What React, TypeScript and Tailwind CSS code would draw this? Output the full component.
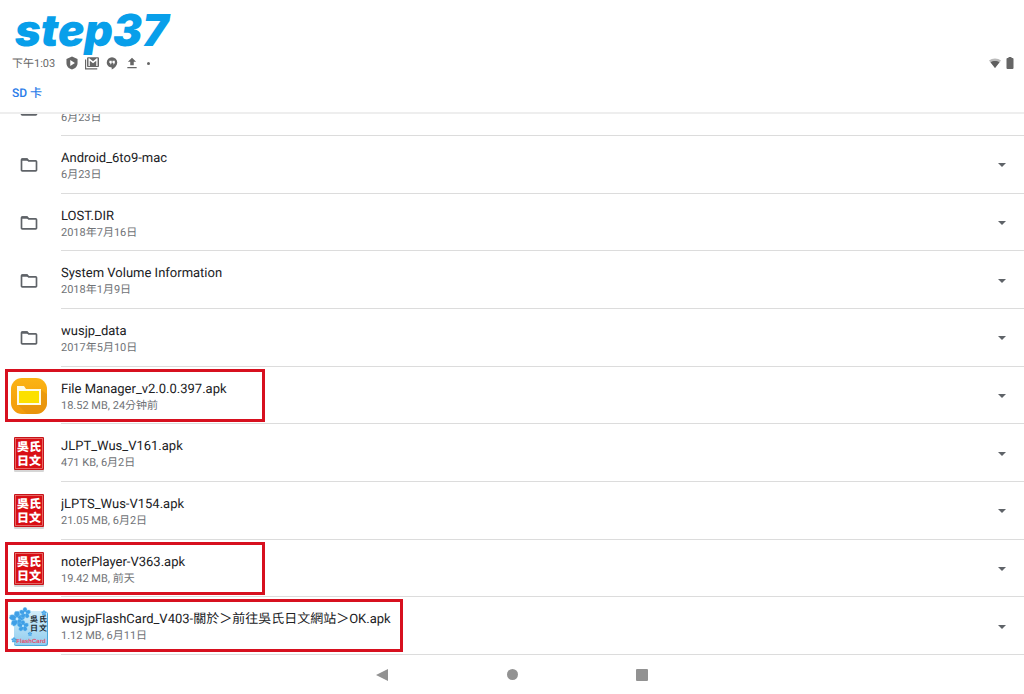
import type { ReactNode } from "react";

type Entry = {
  name: string;
  detail: string;
  icon: ReactNode;
  highlight?: "short" | "long";
};

function FolderIcon() {
  return (
    <svg className="size-5" viewBox="0 0 24 24" fill="#5f6368" aria-hidden="true">
      <path d="M9.2 6l2 2H20v10H4V6h5.2M10 4H4c-1.1 0-2 .9-2 2v12c0 1.1.9 2 2 2h16c1.1 0 2-.9 2-2V8c0-1.1-.9-2-2-2h-8l-2-2z" />
      <path d="M3 4h7l2 3H3z" />
    </svg>
  );
}

function FileManagerIcon() {
  return (
    <svg className="size-[38px]" viewBox="0 0 38 38" aria-hidden="true">
      <defs>
        <linearGradient id="fm-bg" x1="0" y1="0" x2="0" y2="1">
          <stop offset="0" stopColor="#fbb414" />
          <stop offset="1" stopColor="#f29a0c" />
        </linearGradient>
        <clipPath id="fm-clip">
          <rect x="1" y="1" width="36" height="36" rx="11" />
        </clipPath>
      </defs>
      <rect x="1" y="1" width="36" height="36" rx="11" fill="url(#fm-bg)" />
      <path d="M8 28l10 10h20V18l-8-6z" fill="#d9860c" opacity=".4" clipPath="url(#fm-clip)" />
      <path d="M7 9h7l2 3h15v16H7z" fill="#fffbe6" />
      <path d="M9 14h20v12H9z" fill="#fce000" />
    </svg>
  );
}

function SealIcon() {
  return (
    <svg className="h-9 w-8" viewBox="0 0 32 36" aria-hidden="true">
      <rect x="1" y="2" width="30" height="34" rx="1" fill="#bbb" opacity=".6" />
      <rect x="1" y="1" width="30" height="33" rx="1" fill="#c8141a" />
      <rect x="2.5" y="2.5" width="27" height="30" fill="#d90e14" stroke="#ee8a84" strokeWidth=".7" />
      <g
        fill="#fff"
        fontSize="12"
        fontWeight="900"
        textAnchor="middle"
        className="font-['Noto_Sans_CJK_TC',sans-serif]"
      >
        <text x="10" y="15">吳</text>
        <text x="22" y="15">氏</text>
        <text x="10" y="29">日</text>
        <text x="22" y="29">文</text>
      </g>
    </svg>
  );
}

function Blossom({ x, y, size }: { x: number; y: number; size: number }) {
  return (
    <g transform={`translate(${x} ${y}) scale(${size})`}>
      {[0, 72, 144, 216, 288].map((angle) => (
        <path
          key={angle}
          d="M0 0C-4-2-4-7-1-9L0-8l1-1C4-7 4-2 0 0z"
          fill="#3f9fe6"
          stroke="#83caf5"
          strokeWidth=".5"
          transform={`rotate(${angle})`}
        />
      ))}
      <circle r="1.6" fill="#c9ecff" />
    </g>
  );
}

function FlashCardIcon() {
  return (
    <svg className="size-10" viewBox="0 0 40 40" aria-hidden="true">
      <defs>
        <linearGradient id="card-bg" x1="0" y1="0" x2="0" y2="1">
          <stop offset="0" stopColor="#d2edfa" />
          <stop offset="1" stopColor="#92ceef" />
        </linearGradient>
      </defs>
      <rect x="5" y="5" width="34" height="34" rx="2" fill="#4ba8dc" />
      <rect x="5" y="4" width="33" height="34" rx="2" fill="url(#card-bg)" />
      <Blossom x={8} y={12} size={0.9} />
      <Blossom x={16} y={6} size={0.65} />
      <Blossom x={14} y={19} size={0.65} />
      <Blossom x={21} y={27} size={0.25} />
      <Blossom x={5} y={33} size={0.3} />
      <Blossom x={35} y={6} size={0.3} />
      <g
        fill="#1c2a33"
        fontSize="8"
        fontWeight="700"
        textAnchor="middle"
        className="font-['Noto_Sans_CJK_TC',sans-serif]"
      >
        <text x="25" y="15">吳</text>
        <text x="34" y="15">氏</text>
        <text x="25" y="24">日</text>
        <text x="34" y="24">文</text>
      </g>
      <text x="22" y="36" fill="#e2506e" fontSize="6" fontWeight="700" textAnchor="middle" className="font-['Liberation_Sans',sans-serif]">
        FlashCard
      </text>
    </svg>
  );
}

const entries: Entry[] = [
  { name: "Android_6to9-mac", detail: "6月23日", icon: <FolderIcon /> },
  { name: "LOST.DIR", detail: "2018年7月16日", icon: <FolderIcon /> },
  { name: "System Volume Information", detail: "2018年1月9日", icon: <FolderIcon /> },
  { name: "wusjp_data", detail: "2017年5月10日", icon: <FolderIcon /> },
  {
    name: "File Manager_v2.0.0.397.apk",
    detail: "18.52 MB, 24分钟前",
    icon: <FileManagerIcon />,
    highlight: "short",
  },
  { name: "JLPT_Wus_V161.apk", detail: "471 KB, 6月2日", icon: <SealIcon /> },
  { name: "jLPTS_Wus-V154.apk", detail: "21.05 MB, 6月2日", icon: <SealIcon /> },
  {
    name: "noterPlayer-V363.apk",
    detail: "19.42 MB, 前天",
    icon: <SealIcon />,
    highlight: "short",
  },
  {
    name: "wusjpFlashCard_V403-關於＞前往吳氏日文網站＞OK.apk",
    detail: "1.12 MB, 6月11日",
    icon: <FlashCardIcon />,
    highlight: "long",
  },
];

function StatusBar() {
  return (
    <div className="flex h-5 items-center justify-between pl-3 pr-[9px] text-[#666]">
      <div className="flex items-center gap-[6px]">
        <span className="w-[47px] whitespace-nowrap pt-px text-[11px] leading-5">下午1:03</span>
        <svg className="size-[14px]" viewBox="0 0 24 24" fill="currentColor" aria-hidden="true">
          <path
            fillRule="evenodd"
            d="M12 1L2.500 5v7c0 5.500 4 9.700 9.500 11 5.500-1.300 9.500-5.500 9.500-11V5zM9 7l8 5-8 5z"
          />
        </svg>
        <svg className="size-[14px]" viewBox="0 0 24 24" fill="currentColor" aria-hidden="true">
          <path d="M0 6v17h21v-2H2V6z" />
          <path
            fillRule="evenodd"
            d="M5.500 2H22c1.100 0 2 .900 2 2v13c0 1.100-.900 2-2 2H5.500c-1.100 0-2-.900-2-2V4c0-1.100.900-2 2-2zM6 17h2.200V8l5.600 4.500L19.300 8v9h2.200V4h-1.300l-6.400 5.200L7.300 4H6z"
          />
        </svg>
        <svg className="size-[14px]" viewBox="0 0 24 24" fill="currentColor" aria-hidden="true">
          <path
            fillRule="evenodd"
            d="M12 2a9 9 0 0 0-9 9c0 5 4 8.500 8.500 8.500V23C17 20.500 21 16 21 11a9 9 0 0 0-9-9zM7.500 8h4v4l-1.500 2H8.500l1-2h-2zM12.800 8h4v4l-1.500 2h-1.500l1-2h-2z"
          />
        </svg>
        <svg className="size-[14px]" viewBox="0 0 24 24" fill="currentColor" aria-hidden="true">
          <path d="M9 16h6v-6h4l-7-7-7 7h4zm-5 3h16v2H4z" />
        </svg>
        <span className="ml-[2px] size-[3px] rounded-full bg-[#666]" />
      </div>
      <div className="flex items-center gap-1">
        <svg className="h-[10px] w-3" viewBox="0 0 24 20" aria-hidden="true">
          <path d="M12 20L0 5C3.300 2.500 7.400 1 12 1s8.700 1.500 12 4z" fill="#bbb" />
          <path d="M12 20L3 8.500C5.500 6.800 8.600 6 12 6s6.500.800 9 2.500z" fill="#5f5f5f" />
        </svg>
        <svg className="h-3 w-[10px]" viewBox="0 0 10 12" fill="#666" aria-hidden="true">
          <path d="M3.500 0h3v1H7.500a1 1 0 0 1 1 1v9a1 1 0 0 1-1 1h-5a1 1 0 0 1-1-1V2a1 1 0 0 1 1-1h1z" />
        </svg>
      </div>
    </div>
  );
}

function Row({ entry }: { entry: Entry }) {
  return (
    <li className="relative flex flex-1 items-stretch">
      <div className="flex w-[58px] shrink-0 items-center justify-center pt-px">{entry.icon}</div>
      <div className="ml-[3px] flex min-w-0 flex-1 items-center border-b border-[#dcdcdc] pr-3 pt-[2px]">
        <div className="min-w-0 flex-1 pt-[3px]">
          <p className="truncate text-[13px] leading-4 text-[#202124]">{entry.name}</p>
          <p className="truncate text-[11px] leading-4 text-[#6f7276]">{entry.detail}</p>
        </div>
        <button type="button" aria-label={`${entry.name} 選項`} className="flex size-5 items-center justify-center">
          <svg className="h-1 w-2" viewBox="0 0 8 4" fill="#5f6368" aria-hidden="true">
            <path d="M0 0h8L4 4z" />
          </svg>
        </button>
      </div>
      {entry.highlight && (
        <span
          className={`pointer-events-none absolute left-[5px] top-[2px] h-[53px] border-[3px] border-[#d7101f] ${
            entry.highlight === "long" ? "w-[398px]" : "w-[260px]"
          }`}
        />
      )}
    </li>
  );
}

export default function App() {
  return (
    <div className="flex h-screen flex-col bg-white font-[Roboto,'Noto_Sans_CJK_TC',sans-serif] [text-rendering:geometricPrecision]">
      <header className="shrink-0 border-b-2 border-[#eeeeee]">
        <h1 className="h-[53px] pl-[15px] pt-1 font-[Inter,sans-serif] text-[44px] font-black italic leading-[52px] text-[#089fea]">
          step37
        </h1>
        <StatusBar />
        <div className="flex h-[39px] items-center px-3 pt-px">
          <a href="#" className="text-[12px] font-medium leading-5 text-[#2b7de9]">
            SD 卡
          </a>
        </div>
      </header>

      <ul className="flex min-h-0 flex-1 flex-col overflow-hidden">
        <li className="flex h-[22px] shrink-0 items-stretch overflow-hidden">
          <div className="flex w-[58px] items-end justify-center pb-[17px]">
            <FolderIcon />
          </div>
          <div className="ml-[3px] flex-1 border-b border-[#dcdcdc]">
            <p className="mt-[-4px] text-[11px] leading-[15px] text-[#6f7276]">6月23日</p>
          </div>
        </li>
        {entries.map((entry) => (
          <Row key={entry.name} entry={entry} />
        ))}
      </ul>

      <nav className="flex h-[39px] shrink-0 items-center justify-center gap-[110px]" aria-label="系統導覽">
        <button type="button" aria-label="返回" className="flex size-5 items-center justify-center">
          <svg className="size-3" viewBox="0 0 12 12" fill="#929292" aria-hidden="true">
            <path d="M12 0v12L0 6z" />
          </svg>
        </button>
        <button type="button" aria-label="主畫面" className="flex size-5 items-center justify-center">
          <span className="size-[11px] rounded-full bg-[#929292]" />
        </button>
        <button type="button" aria-label="總覽" className="flex size-5 items-center justify-center">
          <span className="size-3 rounded-[1px] bg-[#929292]" />
        </button>
      </nav>
    </div>
  );
}
